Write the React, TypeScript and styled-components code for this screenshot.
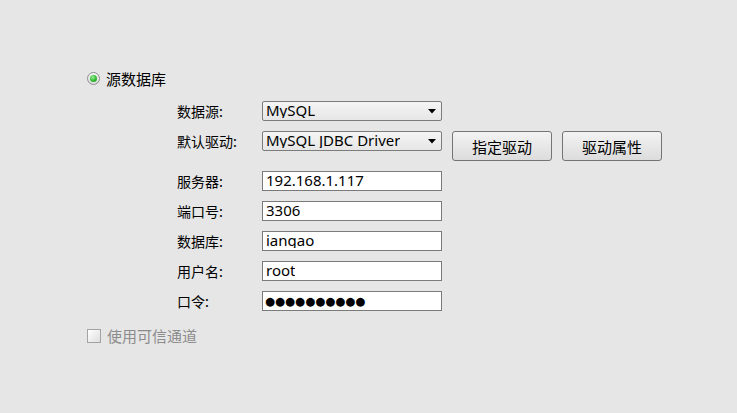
import React from "react";
import styled, { createGlobalStyle } from "styled-components";

const Global = createGlobalStyle`
  html, body { margin: 0; padding: 0; background: #e6e6e6; }
  body { font-family: "Noto Sans", "Noto Sans CJK SC", sans-serif; color: #000; }
`;

const Page = styled.div`
  width: 737px;
  height: 413px;
  box-sizing: border-box;
  padding: 71px 0 0 86px;
  display: flex;
  flex-direction: column;
`;

const OptionRow = styled.label<{ $disabled?: boolean }>`
  display: flex;
  align-items: center;
  gap: 6px;
  height: 15px;
  font-family: "Noto Sans CJK SC", sans-serif;
  font-size: 15px;
  color: ${(p) => (p.$disabled ? "#8c8c8c" : "#000")};
`;

const Radio = styled.span`
  width: 13px;
  height: 13px;
  box-sizing: border-box;
  border-radius: 50%;
  border: 1px solid #8e8e8e;
  background: linear-gradient(#f4f4f4, #dcdcdc);
  display: flex;
  align-items: center;
  justify-content: center;
  margin-left: 1px;
  &::after {
    content: "";
    width: 7px;
    height: 7px;
    border-radius: 50%;
    background: radial-gradient(circle at 40% 35%, #9ef09e 0%, #3cc23c 45%, #1c8f1c 100%);
  }
`;

const Check = styled.span`
  width: 14px;
  height: 14px;
  box-sizing: border-box;
  border: 1px solid #a3a3a3;
  background: linear-gradient(135deg, #ffffff, #dedede);
  margin-left: 1px;
`;

const Form = styled.div`
  margin: 15px 0 0 91px;
  display: grid;
  grid-template-columns: 85px auto;
  row-gap: 10px;
  align-items: start;
`;

const Label = styled.div`
  height: 20px;
  display: flex;
  align-items: center;
  font-family: "Noto Sans CJK SC", sans-serif;
  font-size: 14px;
  white-space: pre;
`;

const Cell = styled.div`
  display: flex;
  align-items: flex-start;
  gap: 10px;
`;

const Combo = styled.div`
  width: 180px;
  height: 20px;
  box-sizing: border-box;
  border: 1px solid #7c7c7c;
  border-radius: 2px;
  background: linear-gradient(#f5f5f5, #e6e6e6);
  display: flex;
  align-items: flex-start;
  justify-content: space-between;
  padding: 0 5px 0 3px;
  overflow: hidden;
`;

const ValueText = styled.span`
  font-family: "Noto Sans", sans-serif;
  font-size: 15px;
  line-height: 20px;
  height: 18px;
  margin-top: -2px;
  overflow: hidden;
  white-space: pre;
`;

const Arrow = styled.svg`
  margin-top: 7px;
  flex: none;
`;

const Field = styled.div`
  width: 180px;
  height: 20px;
  box-sizing: border-box;
  border: 1px solid #7a7a7a;
  background: #fff;
  padding: 0 3px;
  overflow: hidden;
  display: flex;
  align-items: flex-start;
`;

const Dots = styled.span`
  font-family: "DejaVu Sans", sans-serif;
  font-size: 11.5px;
  line-height: 18px;
  letter-spacing: 0;
  margin-left: -1px;
`;

const Button = styled.button`
  width: 100px;
  height: 30px;
  box-sizing: border-box;
  border: 1px solid #747474;
  border-radius: 3px;
  background: linear-gradient(#f3f3f3, #dcdcdc);
  font-family: "Noto Sans CJK SC", sans-serif;
  font-size: 15px;
  color: #000;
  padding: 0;
  display: flex;
  align-items: center;
  justify-content: center;
`;

const BottomRow = styled.div`
  margin-top: 17px;
`;

const ComboBox = ({ value }: { value: string }) => (
  <Combo>
    <ValueText>{value}</ValueText>
    <Arrow width="8" height="5" viewBox="0 0 8 5">
      <path d="M0 0 H8 L4 4.5 Z" fill="#000" />
    </Arrow>
  </Combo>
);

const TextField = ({ value }: { value: string }) => (
  <Field>
    <ValueText>{value}</ValueText>
  </Field>
);

export default function App() {
  return (
    <>
      <Global />
      <Page>
        <OptionRow>
          <Radio />
          源数据库
        </OptionRow>
        <Form>
          <Label>数据源:</Label>
          <Cell>
            <ComboBox value="MySQL" />
          </Cell>
          <Label>默认驱动:</Label>
          <Cell>
            <ComboBox value="MySQL JDBC Driver" />
            <Button>指定驱动</Button>
            <Button>驱动属性</Button>
          </Cell>
          <Label>服务器:</Label>
          <Cell>
            <TextField value="192.168.1.117" />
          </Cell>
          <Label>端口号:</Label>
          <Cell>
            <TextField value="3306" />
          </Cell>
          <Label>数据库:</Label>
          <Cell>
            <TextField value="iangao" />
          </Cell>
          <Label>用户名:</Label>
          <Cell>
            <TextField value="root" />
          </Cell>
          <Label>口令:</Label>
          <Cell>
            <Field>
              <Dots>●●●●●●●●●●</Dots>
            </Field>
          </Cell>
        </Form>
        <BottomRow>
          <OptionRow $disabled>
            <Check />
            使用可信通道
          </OptionRow>
        </BottomRow>
      </Page>
    </>
  );
}
